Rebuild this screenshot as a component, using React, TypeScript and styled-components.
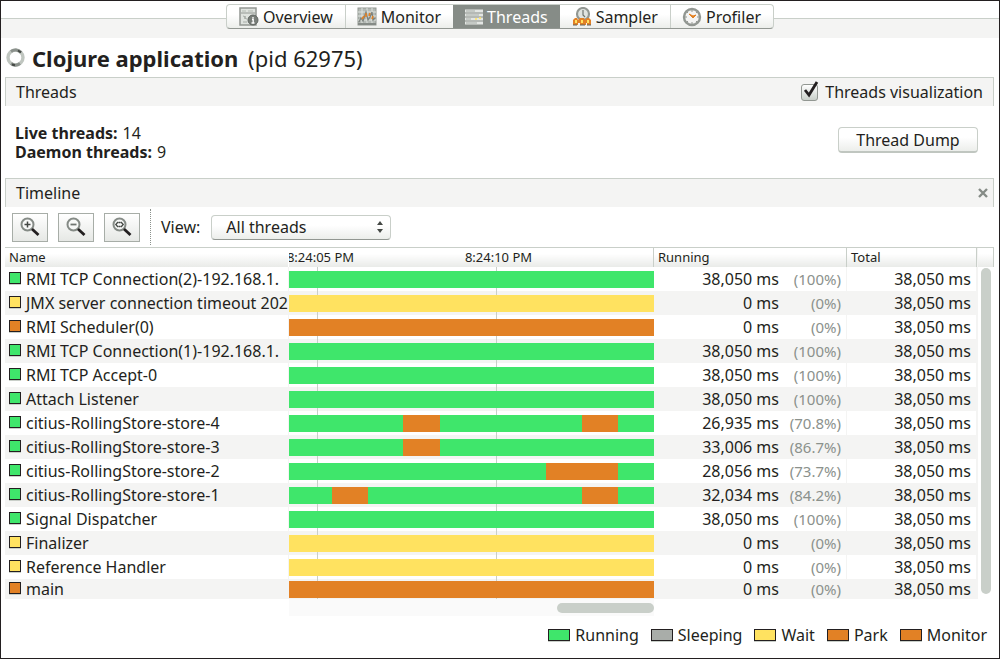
import React from "react";
import styled, { createGlobalStyle } from "styled-components";

const color = {
  ink: "#231f20",
  muted: "#8b918c",
  line: "#c9cfc9",
  panel: "#f4f4f3",
  running: "#3fe66b",
  sleeping: "#a9ada9",
  wait: "#ffe260",
  park: "#e28125",
};

type State = "running" | "sleeping" | "wait" | "park";

const GlobalStyle = createGlobalStyle`
  *, *::before, *::after { box-sizing: border-box; }
  body { margin: 0; background: #fff; }
  body, button, select, input {
    font-family: "Noto Sans", "Lucida Grande", sans-serif;
    color: ${color.ink};
  }
`;

const Window = styled.div`
  min-height: 100vh;
  border: 1px solid ${color.ink};
  display: flex;
  flex-direction: column;
  font-size: 16px;
  line-height: 20px;
`;

const TabBar = styled.nav`
  display: flex;
  justify-content: center;
  height: 37px;
  padding-top: 3px;
  background: linear-gradient(#fff 17px, ${color.line} 17px, ${color.line} 18px, ${color.panel} 18px);
`;

const TabGroup = styled.div`
  display: flex;
  height: 25px;
  border: 1px solid ${color.line};
  border-bottom-color: #929792;
  border-radius: 4px;
  background: linear-gradient(#fff 40%, #eceeeb);
  overflow: hidden;
`;

const Tab = styled.button<{ $active?: boolean; $divided?: boolean }>`
  display: flex;
  align-items: center;
  justify-content: center;
  gap: 4px;
  height: 23px;
  padding: 0 12px;
  border: 0;
  background: ${(p) => (p.$active ? "#868c87" : "none")};
  color: ${(p) => (p.$active ? "#fff" : color.ink)};
  box-shadow: ${(p) => (p.$divided ? `1px 0 0 ${color.line}` : "none")};
  font-size: 16px;
  line-height: 20px;
  svg { flex: none; }
`;

const Title = styled.h1`
  display: flex;
  align-items: center;
  gap: 6px;
  margin: 0;
  height: 39px;
  padding: 0 4px;
  font-size: 22px;
  line-height: 30px;
  font-weight: 700;
`;

const Pid = styled.span`
  margin-left: 4px;
  font-weight: 400;
`;

const PanelBar = styled.header`
  display: flex;
  align-items: center;
  justify-content: space-between;
  height: 29px;
  margin: 0 5px 0 4px;
  padding: 0 10px;
  border: 1px solid ${color.line};
  border-bottom: 0;
  background: ${color.panel};
`;

const PanelTitle = styled.h2`
  margin: 0;
  font-size: 16px;
  line-height: 20px;
  font-weight: 400;
`;

const CheckLabel = styled.label`
  display: flex;
  align-items: center;
  gap: 7px;
`;

const CheckWrap = styled.span`
  position: relative;
  display: flex;
  svg { position: absolute; left: 0; top: -4px; pointer-events: none; }
`;

const CheckBox = styled.input`
  appearance: none;
  width: 17px;
  height: 17px;
  margin: 0;
  border: 1px solid #929792;
  border-radius: 3px;
  background: linear-gradient(#fff, #c9cfc9);
`;

const Summary = styled.section`
  display: flex;
  align-items: center;
  justify-content: space-between;
  height: 72px;
  padding: 2px 21px 0 14px;
`;

const Facts = styled.dl`
  margin: 0;
  line-height: 19px;
  div { display: flex; gap: 5px; }
  dt { font-weight: 700; }
  dd { margin: 0; }
`;

const DumpButton = styled.button`
  height: 26px;
  width: 140px;
  padding: 0;
  margin-bottom: 6px;
  border: 1px solid ${color.line};
  border-bottom: 2px solid #c0c6c0;
  border-radius: 4px;
  background: linear-gradient(#fff 40%, #eceeeb);
  font-size: 16px;
  line-height: 20px;
`;

const CloseButton = styled.button`
  display: flex;
  padding: 0;
  border: 0;
  margin-right: -6px;
  background: none;
`;

const Toolbar = styled.div`
  display: flex;
  align-items: center;
  height: 41px;
  margin: 0 5px 0 4px;
  padding: 0 7px;
  gap: 10px;
  border-bottom: 1px solid ${color.line};
`;

const ToolButton = styled.button`
  display: flex;
  align-items: center;
  justify-content: center;
  width: 36px;
  height: 29px;
  padding: 0;
  border: 1px solid #a7ada7;
  background: linear-gradient(#fff, #e6e8e5);
`;

const Divider = styled.div`
  align-self: stretch;
  margin: 2px 0;
  border-left: 1px dotted #8b918c;
`;

const ViewLabel = styled.label`
  display: flex;
  align-items: center;
  gap: 11px;
`;

const SelectWrap = styled.span`
  position: relative;
  display: flex;
  svg { position: absolute; right: 7px; top: 6px; pointer-events: none; }
`;

const Select = styled.select`
  appearance: none;
  width: 180px;
  height: 25px;
  padding: 0 24px 0 14px;
  border: 1px solid ${color.line};
  border-bottom-color: #929792;
  border-radius: 4px;
  background: linear-gradient(#fff 40%, #eceeeb);
  font-size: 16px;
  line-height: 20px;
`;

const Viewport = styled.section`
  display: flex;
  margin: 0 5px 0 4px;
`;

const TableArea = styled.div`
  flex: 1;
  min-width: 0;
`;

const Table = styled.table`
  width: 100%;
  table-layout: fixed;
  border-collapse: collapse;
  line-height: 20px;
`;

const Col = styled.col<{ $width?: number }>`
  width: ${(p) => (p.$width ? `${p.$width}px` : "auto")};
`;

const headFill = "linear-gradient(#fff 30%, #e9ebe8)";

const HeadCell = styled.th<{ $divided?: boolean }>`
  position: relative;
  height: 19px;
  padding: 0 4px;
  overflow: hidden;
  border-right: 1px solid ${(p) => (p.$divided ? color.line : "transparent")};
  background: ${headFill};
  text-align: left;
  font-size: 13px;
  line-height: 18px;
  font-weight: 400;
  vertical-align: top;
`;

const Tick = styled.span<{ $at: string }>`
  position: absolute;
  left: ${(p) => p.$at};
  transform: translateX(-50%);
`;

const Row = styled.tr`
  height: 24px;
  &:nth-child(even) { background: ${color.panel}; }
  &:last-child { height: 20px; }
`;

const Cell = styled.td`
  padding: 0 5px 0 4px;
  border-right: 1px solid ${color.panel};
  white-space: nowrap;
  overflow: hidden;
`;

const NameCell = styled(Cell)`
  padding-right: 0;
`;

const Swatch = styled.span<{ $state: State; $wide?: boolean }>`
  flex: none;
  width: ${(p) => (p.$wide ? 22 : 12)}px;
  height: 12px;
  border: 1px solid ${color.ink};
  box-shadow: 0 1px 0 ${color.line};
  background: ${(p) => color[p.$state]};
`;

const ThreadName = styled.div`
  display: flex;
  align-items: center;
  gap: 5px;
  ${Swatch} { margin-bottom: 2px; }
`;

const LaneCell = styled.td`
  padding: 0;
  background:
    linear-gradient(${color.line}, ${color.line}) 28px 0 / 1px 100% no-repeat,
    linear-gradient(${color.line}, ${color.line}) 207px 0 / 1px 100% no-repeat;
`;

const Lane = styled.div`
  display: flex;
  height: 17px;
`;

const Segment = styled.div<{ $state: State; $span: number }>`
  flex: ${(p) => p.$span} 1 0;
  background: ${(p) => color[p.$state]};
`;

const Numbers = styled.div`
  display: grid;
  grid-template-columns: 1fr 62px;
  align-items: center;
  text-align: right;
`;

const Percent = styled.span`
  color: ${color.muted};
  font-size: 15px;
`;

const TotalCell = styled(Cell)`
  text-align: right;
`;

const Gutter = styled.div`
  display: flex;
  flex-direction: column;
  align-items: center;
  width: 17px;
  border-left: 1px solid ${color.panel};
`;

const GutterHead = styled.div`
  width: 100%;
  height: 19px;
  border-right: 1px solid ${color.line};
  background: ${headFill};
`;

const VerticalThumb = styled.div`
  flex: 1;
  width: 10px;
  margin: 1px 0 5px;
  border-radius: 5px;
  background: ${color.line};
`;

const HorizontalTrack = styled.div`
  display: flex;
  justify-content: flex-end;
  align-items: center;
  height: 17px;
  margin: 0 345px 0 288px;
  background: #fafafa;
`;

const HorizontalThumb = styled.div`
  width: 97px;
  height: 10px;
  border-radius: 5px;
  background: ${color.line};
`;

const Legend = styled.ul`
  display: flex;
  justify-content: flex-end;
  gap: 12px;
  margin: 0;
  padding: 9px 12px 0;
  list-style: none;
`;

const LegendItem = styled.li`
  display: flex;
  align-items: center;
  gap: 5px;
`;

const OverviewIcon = () => (
  <svg width="20" height="20" viewBox="0 0 20 20" fill="none">
    <rect x="1" y="1" width="16" height="17" fill="#dfe3df" stroke="#929792" strokeWidth="1.5" />
    <path d="M2 6h14" stroke="#929792" />
    <path d="M3 4h4M9 4h5" stroke="#c9cfc9" strokeWidth="2" />
    <path d="M4 9l3 1-2 1 3 1M4 15h4" stroke="#a7ada7" />
    <circle cx="14" cy="13" r="5" fill="#787e79" stroke="#5f6560" />
    <path d="M14 10v1.5M13 12.5h1.2V16M12.5 16h3" stroke="#fff" strokeWidth="1.3" />
  </svg>
);

const MonitorIcon = () => (
  <svg width="20" height="20" viewBox="0 0 20 20" fill="none">
    <rect x="1" y="1" width="18" height="17" fill="#b4bab5" stroke="#929792" />
    <path d="M1 5h18M1 9h18M1 13h18M5 1v17M10 1v17M15 1v17" stroke="#dfe3df" />
    <path d="M2 15l2-4 2 3 3-9 2 8 2-3 2-5 1 8 2-2" stroke="#7d837e" strokeWidth="1.3" />
    <path d="M5 12l2-3M9 10V6M12 9l1-3M15 12l1-3" stroke="#e28125" strokeWidth="1.6" />
    <path d="M1 17h18" stroke="#858b86" strokeWidth="2" />
  </svg>
);

const ThreadsIcon = () => (
  <svg width="18" height="16" viewBox="0 0 18 16" fill="none">
    <path d="M0 2h18M0 6h18M0 10h18M0 14h18" stroke="#e3e6e3" strokeWidth="3" />
    <path d="M1 2h9M1 6h13M1 10h5M1 14h11" stroke="#a7ada7" />
    <path d="M10 10h2M14 9h2" stroke="#ffe260" strokeWidth="1.5" />
  </svg>
);

const SamplerIcon = () => (
  <svg width="20" height="20" viewBox="0 0 20 20" fill="none">
    <circle cx="11" cy="7" r="6" fill="#e0e4e0" stroke="#929792" strokeWidth="2.2" />
    <path d="M11 3v5l2 2" stroke="#6f7570" strokeWidth="1.2" />
    <path d="M1 18v-5l2-2h2l1 2 2-2h4l1 2 2-2h2l2 2v5h-4v-2h-1v2H8v-2H6v2z" fill="#e28125" />
    <path d="M4 16v-3M10 16v-3M16 16v-3" stroke="#ffe260" strokeWidth="2" />
    <path d="M1 18h4M8 18h5M15 18h4" stroke="#5f6560" />
  </svg>
);

const ProfilerIcon = () => (
  <svg width="20" height="20" viewBox="0 0 20 20" fill="none">
    <circle cx="10" cy="10" r="8" fill="#f4f4f3" stroke="#929792" strokeWidth="2.4" />
    <path d="M10 3v2M10 15v2M3 10h2M15 10h2M5 5l1 1M15 5l-1 1M5 15l1-1M15 15l-1-1" stroke="#929792" />
    <path d="M7 7l4 2 3-1-3 3z" fill="#e28125" stroke="#e28125" />
  </svg>
);

const SpinnerIcon = () => (
  <svg width="21" height="21" viewBox="0 0 21 21" fill="none">
    <circle cx="10.5" cy="10.5" r="7.5" stroke="#c0c6c0" strokeWidth="3.4" />
    <path d="M6 4.5A7.5 7.5 0 0 1 16 5.5M15 16.5A7.5 7.5 0 0 1 6 16.5" stroke="#8b918c" strokeWidth="3" />
    <path d="M13 3.5l3 2M7 17.5l3 .8" stroke="#444844" strokeWidth="2" />
  </svg>
);

const ZoomIcon = ({ kind }: { kind: "in" | "out" | "fit" }) => (
  <svg width="20" height="20" viewBox="0 0 20 20" fill="none">
    <circle cx="7.5" cy="7.5" r="6" fill="#f8f9f8" stroke="#858b86" strokeWidth="2" />
    <path d="M12 12l6.5 6" stroke={color.ink} strokeWidth="2.8" />
    {kind === "in" && <path d="M4.5 7.5h6M7.5 4.5v6" stroke="#444844" strokeWidth="1.5" />}
    {kind === "out" && <path d="M4.5 7.5h6" stroke="#6f7570" strokeWidth="1.8" />}
    {kind === "fit" && (
      <path d="M6 5L3.8 7.5 6 10M9 5l2.2 2.5L9 10M6.5 5.5h2M6.5 9.5h2" stroke="#444844" strokeWidth="1.3" />
    )}
  </svg>
);

const tabs = [
  { label: "Overview", icon: <OverviewIcon />, divided: true },
  { label: "Monitor", icon: <MonitorIcon /> },
  { label: "Threads", icon: <ThreadsIcon />, active: true },
  { label: "Sampler", icon: <SamplerIcon />, divided: true },
  { label: "Profiler", icon: <ProfilerIcon /> },
];

type Span = [State, number];
type Thread = { name: string; ms: string; percent: string; spans: Span[] };

const whole = (state: State): Span[] => [[state, 1]];

const threads: Thread[] = [
  { name: "RMI TCP Connection(2)-192.168.1.", ms: "38,050", percent: "100%", spans: whole("running") },
  { name: "JMX server connection timeout 202", ms: "0", percent: "0%", spans: whole("wait") },
  { name: "RMI Scheduler(0)", ms: "0", percent: "0%", spans: whole("park") },
  { name: "RMI TCP Connection(1)-192.168.1.", ms: "38,050", percent: "100%", spans: whole("running") },
  { name: "RMI TCP Accept-0", ms: "38,050", percent: "100%", spans: whole("running") },
  { name: "Attach Listener", ms: "38,050", percent: "100%", spans: whole("running") },
  {
    name: "citius-RollingStore-store-4", ms: "26,935", percent: "70.8%",
    spans: [["running", 114], ["park", 37], ["running", 142], ["park", 36], ["running", 36]],
  },
  {
    name: "citius-RollingStore-store-3", ms: "33,006", percent: "86.7%",
    spans: [["running", 114], ["park", 37], ["running", 214]],
  },
  {
    name: "citius-RollingStore-store-2", ms: "28,056", percent: "73.7%",
    spans: [["running", 257], ["park", 72], ["running", 36]],
  },
  {
    name: "citius-RollingStore-store-1", ms: "32,034", percent: "84.2%",
    spans: [["running", 43], ["park", 36], ["running", 214], ["park", 36], ["running", 36]],
  },
  { name: "Signal Dispatcher", ms: "38,050", percent: "100%", spans: whole("running") },
  { name: "Finalizer", ms: "0", percent: "0%", spans: whole("wait") },
  { name: "Reference Handler", ms: "0", percent: "0%", spans: whole("wait") },
  { name: "main", ms: "0", percent: "0%", spans: whole("park") },
];

const legend: { label: string; state: State }[] = [
  { label: "Running", state: "running" },
  { label: "Sleeping", state: "sleeping" },
  { label: "Wait", state: "wait" },
  { label: "Park", state: "park" },
  { label: "Monitor", state: "park" },
];

export default function App() {
  return (
    <Window>
      <GlobalStyle />
      <TabBar>
        <TabGroup>
          {tabs.map((t) => (
            <Tab key={t.label} type="button" $active={t.active} $divided={t.divided}>
              {t.icon}
              {t.label}
            </Tab>
          ))}
        </TabGroup>
      </TabBar>

      <Title>
        <SpinnerIcon />
        <span>
          Clojure application <Pid>(pid 62975)</Pid>
        </span>
      </Title>

      <PanelBar>
        <PanelTitle>Threads</PanelTitle>
        <CheckLabel>
          <CheckWrap>
            <CheckBox type="checkbox" defaultChecked />
            <svg width="20" height="20" viewBox="0 0 20 20" fill="none">
              <path d="M4 10l4 5 8-13" stroke={color.ink} strokeWidth="2.8" />
            </svg>
          </CheckWrap>
          Threads visualization
        </CheckLabel>
      </PanelBar>

      <Summary>
        <Facts>
          <div><dt>Live threads:</dt><dd>14</dd></div>
          <div><dt>Daemon threads:</dt><dd>9</dd></div>
        </Facts>
        <DumpButton type="button">Thread Dump</DumpButton>
      </Summary>

      <PanelBar>
        <PanelTitle>Timeline</PanelTitle>
        <CloseButton type="button" aria-label="Close timeline">
          <svg width="12" height="12" viewBox="0 0 12 12" fill="none">
            <path d="M2 2l8 8M10 2l-8 8" stroke="#858b86" strokeWidth="2.4" />
          </svg>
        </CloseButton>
      </PanelBar>

      <Toolbar>
        <ToolButton type="button" aria-label="Zoom in"><ZoomIcon kind="in" /></ToolButton>
        <ToolButton type="button" aria-label="Zoom out"><ZoomIcon kind="out" /></ToolButton>
        <ToolButton type="button" aria-label="Scale to fit"><ZoomIcon kind="fit" /></ToolButton>
        <Divider />
        <ViewLabel>
          View:
          <SelectWrap>
            <Select defaultValue="all">
              <option value="all">All threads</option>
            </Select>
            <svg width="8" height="12" viewBox="0 0 8 12" fill="#444844">
              <path d="M4 0l3 4H1zM4 12l3-4H1z" />
            </svg>
          </SelectWrap>
        </ViewLabel>
      </Toolbar>

      <Viewport>
        <TableArea>
          <Table>
            <colgroup>
              <Col $width={283} />
              <Col />
              <Col $width={193} />
              <Col $width={130} />
            </colgroup>
            <thead>
              <tr>
                <HeadCell scope="col">Name</HeadCell>
                <HeadCell scope="col" $divided>
                  <Tick $at="32px">8:24:05 PM</Tick>
                  <Tick $at="210px">8:24:10 PM</Tick>
                </HeadCell>
                <HeadCell scope="col" $divided>Running</HeadCell>
                <HeadCell scope="col" $divided>Total</HeadCell>
              </tr>
            </thead>
            <tbody>
              {threads.map((t) => (
                <Row key={t.name}>
                  <NameCell>
                    <ThreadName>
                      <Swatch $state={t.spans[0][0]} />
                      {t.name}
                    </ThreadName>
                  </NameCell>
                  <LaneCell>
                    <Lane>
                      {t.spans.map(([state, span], i) => (
                        <Segment key={i} $state={state} $span={span} />
                      ))}
                    </Lane>
                  </LaneCell>
                  <Cell>
                    <Numbers>
                      <span>{t.ms} ms</span>
                      <Percent>({t.percent})</Percent>
                    </Numbers>
                  </Cell>
                  <TotalCell>38,050 ms</TotalCell>
                </Row>
              ))}
            </tbody>
          </Table>
        </TableArea>
        <Gutter>
          <GutterHead />
          <VerticalThumb />
        </Gutter>
      </Viewport>
      <HorizontalTrack>
        <HorizontalThumb />
      </HorizontalTrack>

      <Legend>
        {legend.map((l) => (
          <LegendItem key={l.label}>
            <Swatch $state={l.state} $wide />
            {l.label}
          </LegendItem>
        ))}
      </Legend>
    </Window>
  );
}
